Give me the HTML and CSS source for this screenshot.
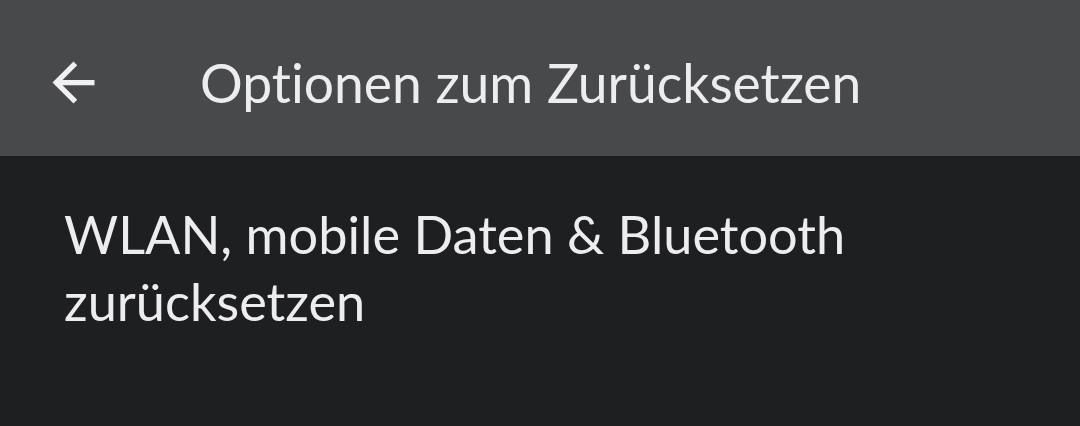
FILE: index.html
```html
<!DOCTYPE html>
<html lang="de">
<head>
<meta charset="utf-8">
<link rel="stylesheet" href="styles.css">
</head>
<body>
<header class="appbar">
  <span class="back">
    <svg width="63" height="63" viewBox="0 0 24 24"><path d="M20 11H7.83l5.59-5.59L12 4l-8 8 8 8 1.41-1.41L7.83 13H20v-2z" fill="#f1f1f3"/></svg>
  </span>
  <h1 class="title">Optionen zum Zurücksetzen</h1>
</header>
<main class="content">
  <p class="item">WLAN, mobile Daten &amp; Bluetooth zurücksetzen</p>
</main>
</body>
</html>
```
FILE: styles.css
```css
html, body { margin: 0; padding: 0; }
body {
  width: 1080px; height: 426px; overflow: hidden;
  background: #1e1f21;
  font-family: "Lato", "Open Sans", sans-serif;
  font-variant-ligatures: none;
  color: #ededf0;
}
.appbar {
  height: 156px;
  background: #48494b;
  display: flex;
  align-items: center;
  padding-left: 42px;
  box-sizing: border-box;
}
.back { display: flex; width: 63px; height: 63px; margin-top: 9px; }
.title {
  margin: 7px 0 0 95px;
  font-weight: 400;
  font-size: 53.4px;
  line-height: 64px;
}
.content { padding: 0 64px; }
.item {
  margin: 0;
  padding-top: 44px;
  font-size: 52.3px;
  line-height: 67px;
  width: 840px;
}
```
